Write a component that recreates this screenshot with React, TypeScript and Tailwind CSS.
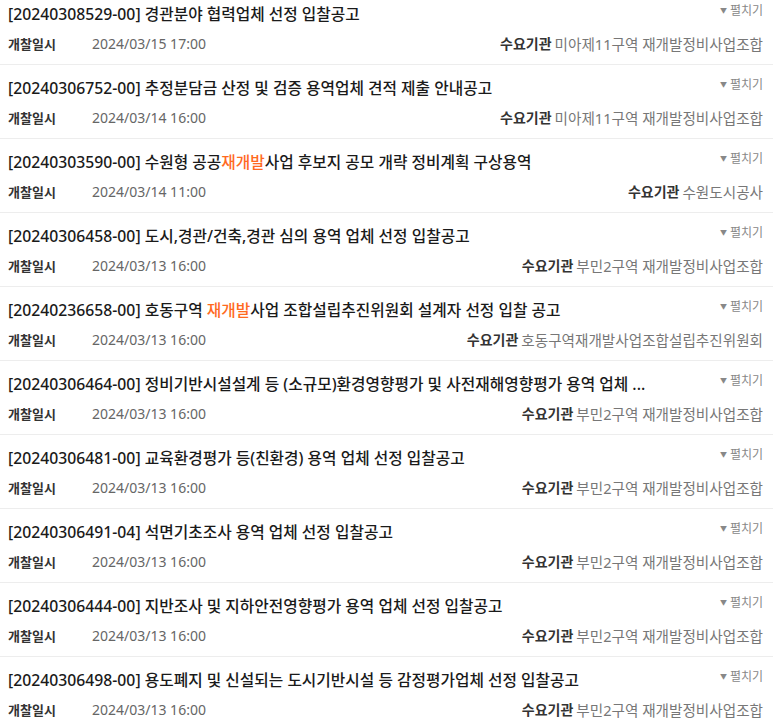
import React from "react";

type Item = {
  id: string;
  title: React.ReactNode;
  date: string;
  org: string;
};

const H = ({ children }: { children: React.ReactNode }) => (
  <span className="text-[#ff6a1f]">{children}</span>
);

const items: Item[] = [
  { id: "20240308529-00", title: "경관분야 협력업체 선정 입찰공고", date: "2024/03/15 17:00", org: "미아제11구역 재개발정비사업조합" },
  { id: "20240306752-00", title: "추정분담금 산정 및 검증 용역업체 견적 제출 안내공고", date: "2024/03/14 16:00", org: "미아제11구역 재개발정비사업조합" },
  { id: "20240303590-00", title: (<>수원형 공공<H>재개발</H>사업 후보지 공모 개략 정비계획 구상용역</>), date: "2024/03/14 11:00", org: "수원도시공사" },
  { id: "20240306458-00", title: "도시,경관/건축,경관 심의 용역 업체 선정 입찰공고", date: "2024/03/13 16:00", org: "부민2구역 재개발정비사업조합" },
  { id: "20240236658-00", title: (<>호동구역 <H>재개발</H>사업 조합설립추진위원회 설계자 선정 입찰 공고</>), date: "2024/03/13 16:00", org: "호동구역재개발사업조합설립추진위원회" },
  { id: "20240306464-00", title: "정비기반시설설계 등 (소규모)환경영향평가 및 사전재해영향평가 용역 업체 ...", date: "2024/03/13 16:00", org: "부민2구역 재개발정비사업조합" },
  { id: "20240306481-00", title: "교육환경평가 등(친환경) 용역 업체 선정 입찰공고", date: "2024/03/13 16:00", org: "부민2구역 재개발정비사업조합" },
  { id: "20240306491-04", title: "석면기초조사 용역 업체 선정 입찰공고", date: "2024/03/13 16:00", org: "부민2구역 재개발정비사업조합" },
  { id: "20240306444-00", title: "지반조사 및 지하안전영향평가 용역 업체 선정 입찰공고", date: "2024/03/13 16:00", org: "부민2구역 재개발정비사업조합" },
  { id: "20240306498-00", title: "용도폐지 및 신설되는 도시기반시설 등 감정평가업체 선정 입찰공고", date: "2024/03/13 16:00", org: "부민2구역 재개발정비사업조합" },
];

export default function App() {
  return (
    <div
      className="w-[773px] h-[725px] overflow-hidden bg-white"
      style={{ fontFamily: '"Noto Sans", "Noto Sans CJK KR", sans-serif' }}
    >
      <div className="-mt-[9px]">
        {items.map((it) => (
          <div key={it.id} className="pl-[8px] pr-[10px] pt-[13px] pb-[10px] border-b border-[#ededed]">
            <div className="flex items-start justify-between h-[20px]">
              <div className="text-[15.75px] leading-[20px] text-[#1a1a1a] font-medium whitespace-nowrap">
                [{it.id}] {it.title}
              </div>
              <div className="flex items-center gap-[3px] text-[12px] leading-[14px] text-[#888]">
                <span className="text-[7px]">▼</span>
                <span>펼치기</span>
              </div>
            </div>
            <div className="flex items-center justify-between h-[20px] mt-[10px] leading-[20px]">
              <div className="flex items-center">
                <span className="w-[84px] text-[13px] text-[#333] font-bold">개찰일시</span>
                <span className="text-[14px] text-[#666]">{it.date}</span>
              </div>
              <div className="flex items-center gap-[3px]">
                <span className="text-[14px] text-[#333] font-bold">수요기관</span>
                <span className="text-[14.6px] text-[#777]">{it.org}</span>
              </div>
            </div>
          </div>
        ))}
      </div>
    </div>
  );
}
